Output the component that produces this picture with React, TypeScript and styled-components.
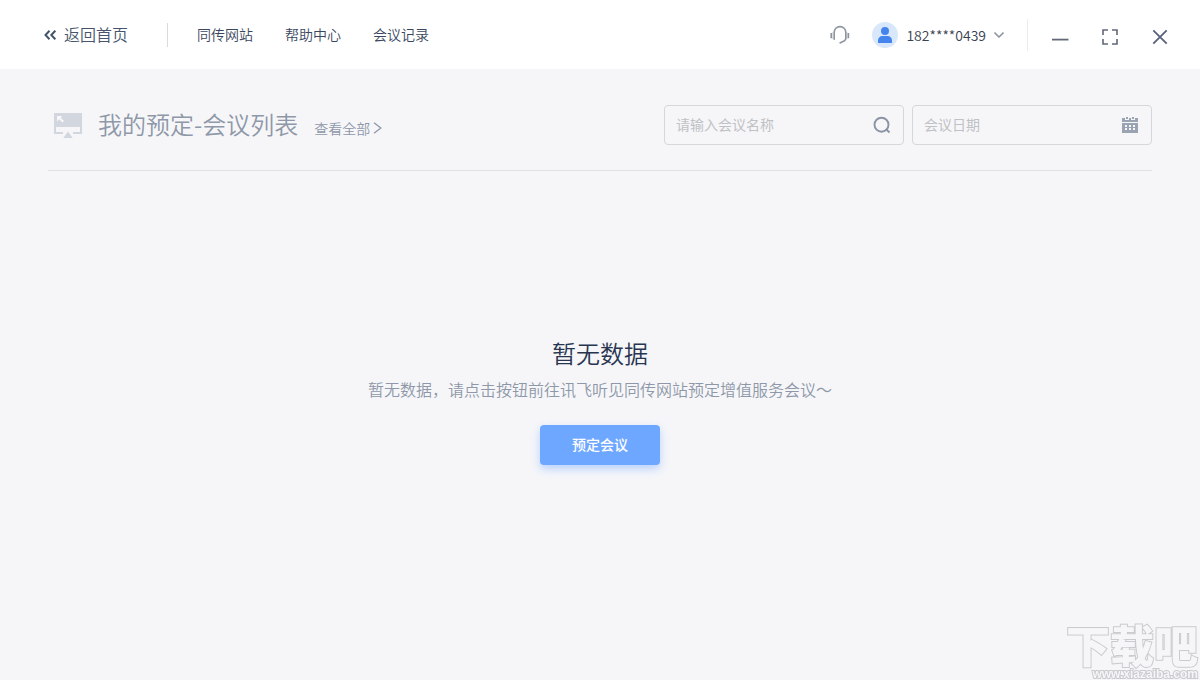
import React from "react";
import styled, { createGlobalStyle } from "styled-components";

const Global = createGlobalStyle`
  *, *::before, *::after { box-sizing: border-box; }
  body {
    margin: 0;
    background: #f6f6f9;
    font-family: "Noto Sans CJK SC", "Noto Sans", sans-serif;
    font-weight: 350;
    color: #3d4a61;
  }
  button, input { font-family: inherit; font-weight: inherit; }
  h1, h2, p { margin: 0; font-weight: inherit; }
  svg { display: block; flex: none; }
`;

const Page = styled.div`
  min-height: 100vh;
  display: flex;
  flex-direction: column;
  background: #f6f6f9;
`;

const Header = styled.header`
  display: flex;
  align-items: center;
  justify-content: space-between;
  height: 69px;
  padding: 0 30px 0 44px;
  background: #fff;
`;

const HeaderGroup = styled.div`
  display: flex;
  align-items: center;
`;

const BackLink = styled.a`
  display: flex;
  align-items: center;
  gap: 8px;
  font-size: 16px;
  line-height: 22px;
  color: #46546c;
  text-decoration: none;
`;

const BackLabel = styled.span`
  padding-bottom: 2px;
`;

const Divider = styled.span<{ $height: number; $color: string }>`
  width: 1px;
  height: ${(p) => p.$height}px;
  background: ${(p) => p.$color};
`;

const Nav = styled.nav`
  display: flex;
  gap: 32px;
  margin-left: 29px;
  padding-bottom: 2px;
`;

const NavLink = styled.a`
  font-size: 14px;
  line-height: 20px;
  color: #3a475e;
  text-decoration: none;
`;

const BackArea = styled.div`
  display: flex;
  align-items: center;
  gap: 39px;
`;

const PlainButton = styled.button`
  display: flex;
  align-items: center;
  justify-content: center;
  padding: 0;
  border: 0;
  background: none;
  color: inherit;
  cursor: pointer;
`;

const AccountButton = styled(PlainButton)`
  gap: 8px;
  margin: 0 23px 0 22px;
  font-size: 14px;
  line-height: 20px;
  color: #3a4250;
`;

const WindowControls = styled.div`
  display: flex;
  gap: 30px;
  margin-left: 22px;
  padding-top: 4px;
`;

const WindowButton = styled(PlainButton)`
  width: 20px;
  height: 20px;
`;

const Main = styled.main`
  flex: 1;
  display: flex;
  flex-direction: column;
  padding: 36px 48px 0;
`;

const Toolbar = styled.div`
  display: flex;
  align-items: center;
  justify-content: space-between;
  padding-bottom: 25px;
  border-bottom: 1px solid #dfe1e5;
`;

const TitleGroup = styled.div`
  display: flex;
  align-items: center;
  padding-left: 6px;
`;

const Title = styled.h1`
  margin: 0 16px;
  padding-bottom: 2px;
  font-size: 24px;
  line-height: 36px;
  color: #8e98a8;
`;

const AllLink = styled.a`
  display: flex;
  align-items: center;
  gap: 3px;
  padding-top: 6px;
  font-size: 14px;
  line-height: 20px;
  color: #8e98a8;
  text-decoration: none;
`;

const Filters = styled.form`
  display: flex;
  gap: 8px;
`;

const Field = styled.label`
  display: flex;
  align-items: center;
  width: 240px;
  height: 40px;
  padding: 0 12px 0 11px;
  border: 1px solid #d5d7db;
  border-radius: 4px;
`;

const FieldInput = styled.input`
  flex: 1;
  min-width: 0;
  padding: 0 0 2px;
  border: 0;
  outline: 0;
  background: none;
  font-size: 14px;
  font-weight: 400;
  line-height: 20px;
  color: #3d4a61;
  &::placeholder { color: #bfc1c4; opacity: 1; }
`;

const Empty = styled.section`
  flex: 1;
  display: flex;
  flex-direction: column;
  align-items: center;
  padding: 164px 0 48px;
`;

const EmptyTitle = styled.h2`
  font-size: 24px;
  line-height: 36px;
  color: #283550;
`;

const EmptyText = styled.p`
  margin-top: 6px;
  font-size: 16px;
  line-height: 24px;
  color: #8e98a8;
`;

const BookButton = styled.button`
  margin-top: 24px;
  width: 120px;
  height: 40px;
  padding: 0 0 2px;
  border: 0;
  border-radius: 4px;
  background: #6ea7ff;
  box-shadow: 0 4px 8px rgba(110, 167, 255, 0.45);
  font-size: 14px;
  font-weight: 500;
  line-height: 20px;
  color: #fff;
  cursor: pointer;
`;

const Watermark = styled.div`
  position: fixed;
  right: 2px;
  bottom: 0;
  display: flex;
  flex-direction: column;
  align-items: flex-end;
  color: #f6f6f8;
  -webkit-text-stroke: 2px #cbcbcf;
  paint-order: stroke fill;
  pointer-events: none;
`;

const WatermarkName = styled.span`
  font-size: 44px;
  font-weight: 900;
  line-height: 48px;
`;

const WatermarkSite = styled.span`
  font-family: "Liberation Sans", sans-serif;
  font-size: 12px;
  font-weight: 700;
  line-height: 12px;
`;

const BackIcon = () => (
  <svg width="12" height="10" viewBox="0 0 12 10" fill="none" stroke="#46546c" strokeWidth="2" aria-hidden="true">
    <path d="M5.5 0.7 1.5 5l4 4.3M11.3 0.7 7.3 5l4 4.3" />
  </svg>
);

const HeadsetIcon = () => (
  <svg width="20" height="20" viewBox="0 0 20 20" fill="none" stroke="#8d939f" strokeWidth="1.6" aria-hidden="true">
    <path d="M4.2 14.8V7.4A5.8 5.8 0 0 1 10 1.6a5.8 5.8 0 0 1 5.8 5.8v6c0 2.4-3 3.2-6.2 4.8" />
    <path d="M1.2 8v5.2M18.4 8v5.2" />
    <path d="M2.7 7.2v6.8M17 7.2v6.8" strokeWidth="0.7" opacity="0.5" />
  </svg>
);

const AvatarIcon = () => (
  <svg width="26" height="26" viewBox="0 0 26 26" aria-hidden="true">
    <circle cx="13" cy="13" r="13" fill="#d9e7fb" />
    <circle cx="13" cy="9" r="4" fill="#4484ec" />
    <path d="M6 21v-2.5A4.5 4.5 0 0 1 10.5 14h5A4.5 4.5 0 0 1 20 18.5V21z" fill="#4484ec" />
  </svg>
);

const ChevronIcon = () => (
  <svg width="10" height="6" viewBox="0 0 10 6" fill="none" stroke="#8f959f" strokeWidth="1.5" aria-hidden="true">
    <path d="M0.5 0.6 5 5l4.5-4.4" />
  </svg>
);

const MinimizeIcon = () => (
  <svg width="20" height="20" viewBox="0 0 20 20" aria-hidden="true">
    <path d="M2 11.7h16.5v1.8H2z" fill="#626a78" />
  </svg>
);

const FullscreenIcon = () => (
  <svg width="20" height="20" viewBox="0 0 20 20" fill="none" stroke="#606878" strokeWidth="1.6" aria-hidden="true">
    <path d="M3 8V3h5M12 3h5v5M17 12v5h-5M8 17H3v-5" />
  </svg>
);

const CloseIcon = () => (
  <svg width="20" height="20" viewBox="0 0 20 20" fill="none" stroke="#59627a" strokeWidth="1.8" aria-hidden="true">
    <path d="M3.3 3.3l13.4 13.4M16.7 3.3 3.3 16.7" />
  </svg>
);

const BoardIcon = () => (
  <svg width="28" height="26" viewBox="0 0 28 26" aria-hidden="true">
    <path d="M0 1h28v14H0z" fill="#d2d6de" />
    <path d="M0 14h2v6h7v2H0zM28 14h-2v6h-7v2h9z" fill="#d2d6de" />
    <path d="M14 19.5 18.7 26H9.300z" fill="#d2d6de" />
    <path d="M3 4h5.500L6.800 5.700l3.200 3.400-1.600 1.500L5.200 7.300 3 9.500z" fill="#f7f7fa" />
  </svg>
);

const MoreIcon = () => (
  <svg width="9" height="12" viewBox="0 0 9 12" fill="none" stroke="#8e98a8" strokeWidth="1.3" aria-hidden="true">
    <path d="M1 0.8 7.8 6 1 11.2" />
  </svg>
);

const SearchIcon = () => (
  <svg width="18" height="18" viewBox="0 0 18 18" fill="none" stroke="#8a94a4" strokeWidth="1.9" aria-hidden="true">
    <circle cx="8.5" cy="8.7" r="7" />
    <path d="M12.9 13 16.5 16.5" />
  </svg>
);

const CalendarIcon = () => (
  <svg width="18" height="18" viewBox="0 0 18 18" aria-hidden="true">
    <path
      fillRule="evenodd"
      fill="#9aa3b1"
      d="M1 2h3v2h4V2h2v2h4V2h3v4H1zM5 1h2v2H5zM11 1h2v2h-2zM1 7h16v10H1zM4 9v2h2V9zM8 9v2h2V9zM12 9v2h2V9zM4 12v2h2v-2zM8 12v2h2v-2zM12 12v2h2v-2z"
    />
  </svg>
);

const navItems = ["同传网站", "帮助中心", "会议记录"];

export default function App() {
  return (
    <Page>
      <Global />
      <Header>
        <HeaderGroup>
          <BackArea>
            <BackLink href="#home">
              <BackIcon />
              <BackLabel>返回首页</BackLabel>
            </BackLink>
            <Divider $height={24} $color="#d9dbdf" />
          </BackArea>
          <Nav>
            {navItems.map((item) => (
              <NavLink key={item} href="#nav">
                {item}
              </NavLink>
            ))}
          </Nav>
        </HeaderGroup>
        <HeaderGroup>
          <PlainButton type="button" aria-label="客服">
            <HeadsetIcon />
          </PlainButton>
          <AccountButton type="button">
            <AvatarIcon />
            182****0439
            <ChevronIcon />
          </AccountButton>
          <Divider $height={32} $color="#ececef" />
          <WindowControls>
            <WindowButton type="button" aria-label="最小化">
              <MinimizeIcon />
            </WindowButton>
            <WindowButton type="button" aria-label="全屏">
              <FullscreenIcon />
            </WindowButton>
            <WindowButton type="button" aria-label="关闭">
              <CloseIcon />
            </WindowButton>
          </WindowControls>
        </HeaderGroup>
      </Header>
      <Main>
        <Toolbar>
          <TitleGroup>
            <BoardIcon />
            <Title>我的预定-会议列表</Title>
            <AllLink href="#all">
              查看全部
              <MoreIcon />
            </AllLink>
          </TitleGroup>
          <Filters>
            <Field>
              <FieldInput type="text" placeholder="请输入会议名称" aria-label="会议名称" />
              <SearchIcon />
            </Field>
            <Field>
              <FieldInput type="text" placeholder="会议日期" aria-label="会议日期" />
              <CalendarIcon />
            </Field>
          </Filters>
        </Toolbar>
        <Empty>
          <EmptyTitle>暂无数据</EmptyTitle>
          <EmptyText>暂无数据，请点击按钮前往讯飞听见同传网站预定增值服务会议～</EmptyText>
          <BookButton type="button">预定会议</BookButton>
        </Empty>
      </Main>
      <Watermark>
        <WatermarkName>下载吧</WatermarkName>
        <WatermarkSite>www.xiazaiba.com</WatermarkSite>
      </Watermark>
    </Page>
  );
}
